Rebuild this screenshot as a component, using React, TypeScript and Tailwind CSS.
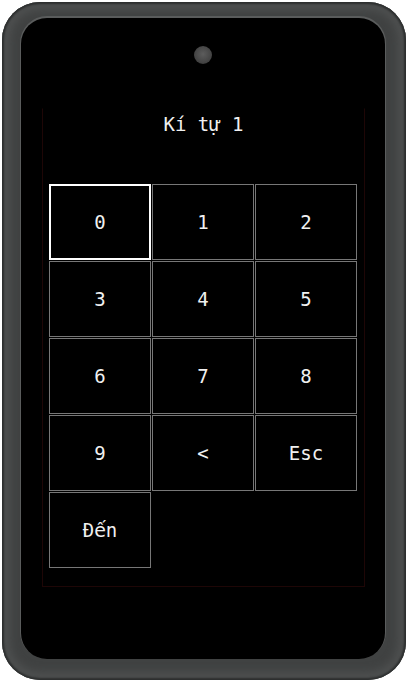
import React from "react";

const keys = ["0", "1", "2", "3", "4", "5", "6", "7", "8", "9", "<", "Esc", "Đến"];

function Label({ k }: { k: string }) {
  if (k === "Đến") {
    return (
      <span>
        Đ<span style={{ fontFamily: '"DejaVu Sans", sans-serif' }}>ế</span>n
      </span>
    );
  }
  return <span>{k}</span>;
}

export default function App() {
  return (
    <div className="w-[408px] h-[683px] bg-white pt-[2px] pb-[3px] px-[2px]">
      <div className="h-full rounded-[38px] bg-[#404242] shadow-[inset_0_0_2px_2px_#2c2e2e,inset_0_0_8px_8px_#4e5050] pl-[19px] pr-[21px] pt-[16px] pb-[21px]">
        <div className="h-full rounded-[26px] bg-black shadow-[0_-1px_0_1px_#5a5c5c] flex flex-col items-center">
          <div className="mt-[28px] w-[18px] h-[18px] rounded-full bg-[radial-gradient(circle_at_50%_45%,#5c5c5c,#434343_65%,#262626_100%)]" />
          <div
            className="mt-[44px] ml-[1px] w-[323px] h-[479px] border border-[#1e0606] border-t-transparent pl-[6px] pt-[4px] flex flex-col"
            style={{ fontFamily: '"DejaVu Sans Mono", monospace' }}
          >
            <div className="h-[22px] text-center text-[#f0f0f0] text-[19px] leading-[22px] pr-[6px]">
              Kí tự 1
            </div>
            <div className="mt-[49px] grid grid-cols-[102px_102px_102px] auto-rows-[76px] gap-[1px]">
              {keys.map((k, i) => (
                <div
                  key={k}
                  className={
                    "flex items-center justify-center text-[#f0f0f0] text-[19px] " +
                    (i === 0 ? "border-2 border-white" : "border border-[#777]")
                  }
                >
                  <Label k={k} />
                </div>
              ))}
            </div>
          </div>
        </div>
      </div>
    </div>
  );
}
